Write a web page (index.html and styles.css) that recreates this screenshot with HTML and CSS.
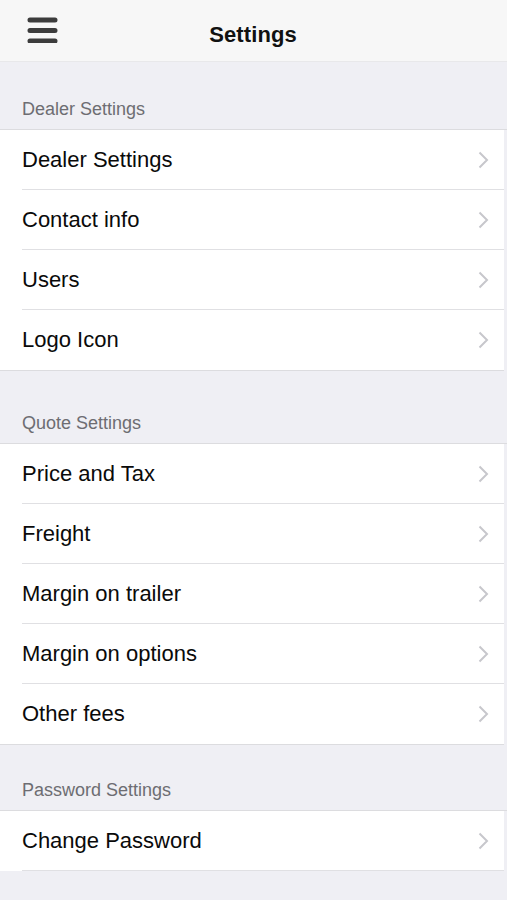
FILE: index.html
```html
<!DOCTYPE html>
<html lang="en">
<head>
    <meta charset="utf-8">
    <title>Settings</title>
    <link rel="stylesheet" href="styles.css">
</head>
<body>
    <header class="nav-bar">
        <button class="menu-button" aria-label="Menu">
            <svg width="31" height="28" viewBox="0 0 31 28">
                <path d="M3 5H28M3 15.5H28M3 26H28" stroke="#3c3c3c" stroke-width="5" stroke-linecap="round"/>
            </svg>
        </button>
        <h1 class="nav-title">Settings</h1>
    </header>

    <div class="section-head first">Dealer Settings</div>
    <ul class="group">
        <li class="row">Dealer Settings<svg class="chevron" viewBox="0 0 11 18"><path d="M1.5 1.5L9 9L1.5 16.5"/></svg></li>
        <li class="row">Contact info<svg class="chevron" viewBox="0 0 11 18"><path d="M1.5 1.5L9 9L1.5 16.5"/></svg></li>
        <li class="row">Users<svg class="chevron" viewBox="0 0 11 18"><path d="M1.5 1.5L9 9L1.5 16.5"/></svg></li>
        <li class="row">Logo Icon<svg class="chevron" viewBox="0 0 11 18"><path d="M1.5 1.5L9 9L1.5 16.5"/></svg></li>
    </ul>

    <div class="section-head second">Quote Settings</div>
    <ul class="group">
        <li class="row">Price and Tax<svg class="chevron" viewBox="0 0 11 18"><path d="M1.5 1.5L9 9L1.5 16.5"/></svg></li>
        <li class="row">Freight<svg class="chevron" viewBox="0 0 11 18"><path d="M1.5 1.5L9 9L1.5 16.5"/></svg></li>
        <li class="row">Margin on trailer<svg class="chevron" viewBox="0 0 11 18"><path d="M1.5 1.5L9 9L1.5 16.5"/></svg></li>
        <li class="row">Margin on options<svg class="chevron" viewBox="0 0 11 18"><path d="M1.5 1.5L9 9L1.5 16.5"/></svg></li>
        <li class="row">Other fees<svg class="chevron" viewBox="0 0 11 18"><path d="M1.5 1.5L9 9L1.5 16.5"/></svg></li>
    </ul>

    <div class="section-head third">Password Settings</div>
    <ul class="group inset-end">
        <li class="row">Change Password<svg class="chevron" viewBox="0 0 11 18"><path d="M1.5 1.5L9 9L1.5 16.5"/></svg></li>
    </ul>
</body>
</html>
```

FILE: styles.css
```css
/* Page base: grouped table background */
body {
    margin: 0;
    background-color: #efeff4;
    font-family: "Liberation Sans", Arial, sans-serif;
    color: #000;
    height: 900px;
    overflow: hidden;
}

/* Top navigation bar */
.nav-bar {
    position: relative;
    box-sizing: border-box;
    height: 62px;
    padding-top: 8px;
    background-color: #f7f7f7;
    border-bottom: 1px solid #e8e8ea;
    display: flex;
    align-items: center;
    justify-content: center;
}

.menu-button {
    position: absolute; /* sits over the bar, title stays centred */
    left: 27px;
    top: 15px;
    padding: 0;
    border: none;
    background: none;
    line-height: 0;
}

.nav-title {
    margin: 0 0 0 -1px;
    font-size: 22px;
    font-weight: bold;
    letter-spacing: 0.1px;
    color: #111;
}

/* Grey section captions */
.section-head {
    box-sizing: border-box;
    display: flex;
    align-items: flex-end;
    padding: 0 0 9px 22px;
    font-size: 18px;
    line-height: 22px;
    color: #6d6d72;
    border-bottom: 1px solid #dcdcdf;
}

.section-head.first { height: 68px; }
.section-head.second { height: 73px; }
.section-head.third { height: 66px; }

/* White row groups */
.group {
    list-style: none;
    margin: 0 3px 0 0;
    padding: 0;
    background-color: #fff;
    border-bottom: 1px solid #dcdcdf;
}

.group.inset-end {
    border-bottom: none;
}

.row {
    box-sizing: border-box;
    position: relative;
    height: 60px;
    display: flex;
    align-items: center;
    justify-content: space-between;
    padding: 0 15px 1px 22px;
    font-size: 22px;
    color: #0a0a0a;
}

/* inset separator between rows */
.row::after {
    content: "";
    position: absolute;
    left: 22px;
    right: 0;
    bottom: 0;
    height: 1px;
    background-color: #e0e0e3;
}

.group:not(.inset-end) .row:last-child::after {
    display: none;
}

/* Disclosure arrow */
.chevron {
    width: 11px;
    height: 18px;
    fill: none;
    stroke: #c7c7cc;
    stroke-width: 2;
}
```
